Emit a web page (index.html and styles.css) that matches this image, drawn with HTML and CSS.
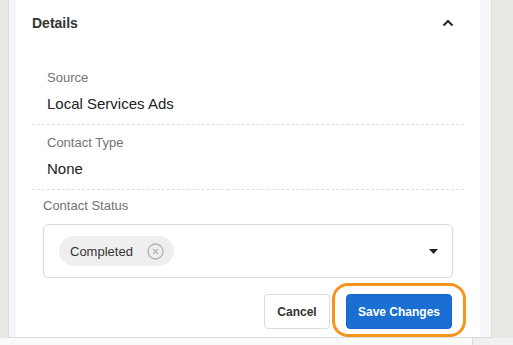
FILE: index.html
```html
<!DOCTYPE html>
<html lang="en">
<head>
    <meta charset="UTF-8">
    <meta name="viewport" content="width=device-width, initial-scale=1.0">
    <title>Details</title>
    <link rel="stylesheet" href="styles.css">
</head>
<body>

<div class="panel">
    <div class="card">
        <div class="card-header">
            <h3>Details</h3>
            <svg class="chevron" width="12" height="8" viewBox="0 0 12 8">
                <path d="M1.5 6.5 L6 2 L10.5 6.5" fill="none" stroke="#2b2b2b" stroke-width="2.2"/>
            </svg>
        </div>

        <div class="card-body">
            <div class="field">
                <div class="field-label">Source</div>
                <div class="field-value">Local Services Ads</div>
            </div>
            <div class="field">
                <div class="field-label">Contact Type</div>
                <div class="field-value">None</div>
            </div>

            <div class="status">
                <label class="field-label">Contact Status</label>
                <div class="select">
                    <span class="chip">
                        Completed
                        <svg width="17" height="17" viewBox="0 0 17 17">
                            <circle cx="8.5" cy="8.5" r="7.5" fill="none" stroke="#b3b3b3" stroke-width="1.3"/>
                            <path d="M6 6 L11 11 M11 6 L6 11" stroke="#b3b3b3" stroke-width="1.3"/>
                        </svg>
                    </span>
                    <svg class="caret" width="9" height="5" viewBox="0 0 9 5">
                        <path d="M0 0 H9 L4.5 5 Z" fill="#222"/>
                    </svg>
                </div>

                <div class="actions">
                    <button class="btn btn-cancel">Cancel</button>
                    <button class="btn btn-save">Save Changes</button>
                </div>
            </div>
        </div>
    </div>
</div>

<div class="footer">
    <div class="footer-left"></div>
</div>

</body>
</html>
```

FILE: styles.css
```css
body {
    font-family: "Liberation Sans", Arial, sans-serif;
    background-color: #ebe9e6;
    margin: 0;
    width: 513px;
    height: 345px;
    overflow: hidden;
    color: #333;
}

.panel {
    margin-left: 8px;
    width: 484px;
    box-sizing: border-box;
    background-color: #f5f7fa;
    border: 1px solid #dcdcdc;
    border-top: none;
    padding: 0 11px 0 7px;
}

.card {
    background-color: white;
    padding: 0 16px 8px;
}

.card-header {
    height: 45px;
    display: flex;
    justify-content: space-between;
    align-items: center;
}

.card-header h3 {
    margin: 0;
    font-size: 14px;
    font-weight: bold;
    color: #333;
}

.chevron {
    margin-right: 10px;
}

.card-body {
    padding-top: 15px;
}

.field {
    padding: 10px 15px;
    border-bottom: 1px dashed #dedede;
}

.field-label {
    display: block;
    font-size: 13px;
    line-height: 16px;
    color: #737373;
}

.field-value {
    margin-top: 8px;
    font-size: 15px;
    line-height: 20px;
    color: #222;
}

.status {
    padding: 8px 11px 0;
}

.select {
    margin-top: 10px;
    height: 54px;
    box-sizing: border-box;
    border: 1px solid #dadada;
    border-radius: 5px;
    display: flex;
    align-items: center;
    justify-content: space-between;
    padding: 0 14px 0 15px;
}

.chip {
    height: 30px;
    width: 115px;
    box-sizing: border-box;
    display: flex;
    align-items: center;
    justify-content: space-between;
    padding: 0 10px 0 11px;
    border-radius: 15px;
    background-color: #efefef;
    font-size: 13px;
    color: #333;
}

.actions {
    display: flex;
    justify-content: flex-end;
    gap: 16px;
    margin-top: 16px;
    padding-right: 1px;
}

.btn {
    height: 35px;
    border-radius: 4px;
    font-family: "Liberation Sans", Arial, sans-serif;
    font-size: 12px;
    font-weight: bold;
    padding: 0;
    cursor: pointer;
}

.btn-cancel {
    width: 66px;
    background-color: white;
    border: 1px solid #dcdcdc;
    color: #333;
}

.btn-save {
    position: relative;
    width: 106px;
    background-color: #1b6fd3;
    border: 1px solid #1765c4;
    color: white;
}

.btn-save::after {
    content: "";
    position: absolute;
    top: -12px;
    bottom: -9px;
    left: -15px;
    right: -15px;
    border: 3px solid #f7941d;
    border-radius: 16px;
    pointer-events: none;
}

.footer {
    height: 8px;
    display: flex;
    background-color: #f1f0ee;
}

.footer-left {
    width: 472px;
    background-color: #fafafa;
    border-right: 1px solid #dedede;
}
```
